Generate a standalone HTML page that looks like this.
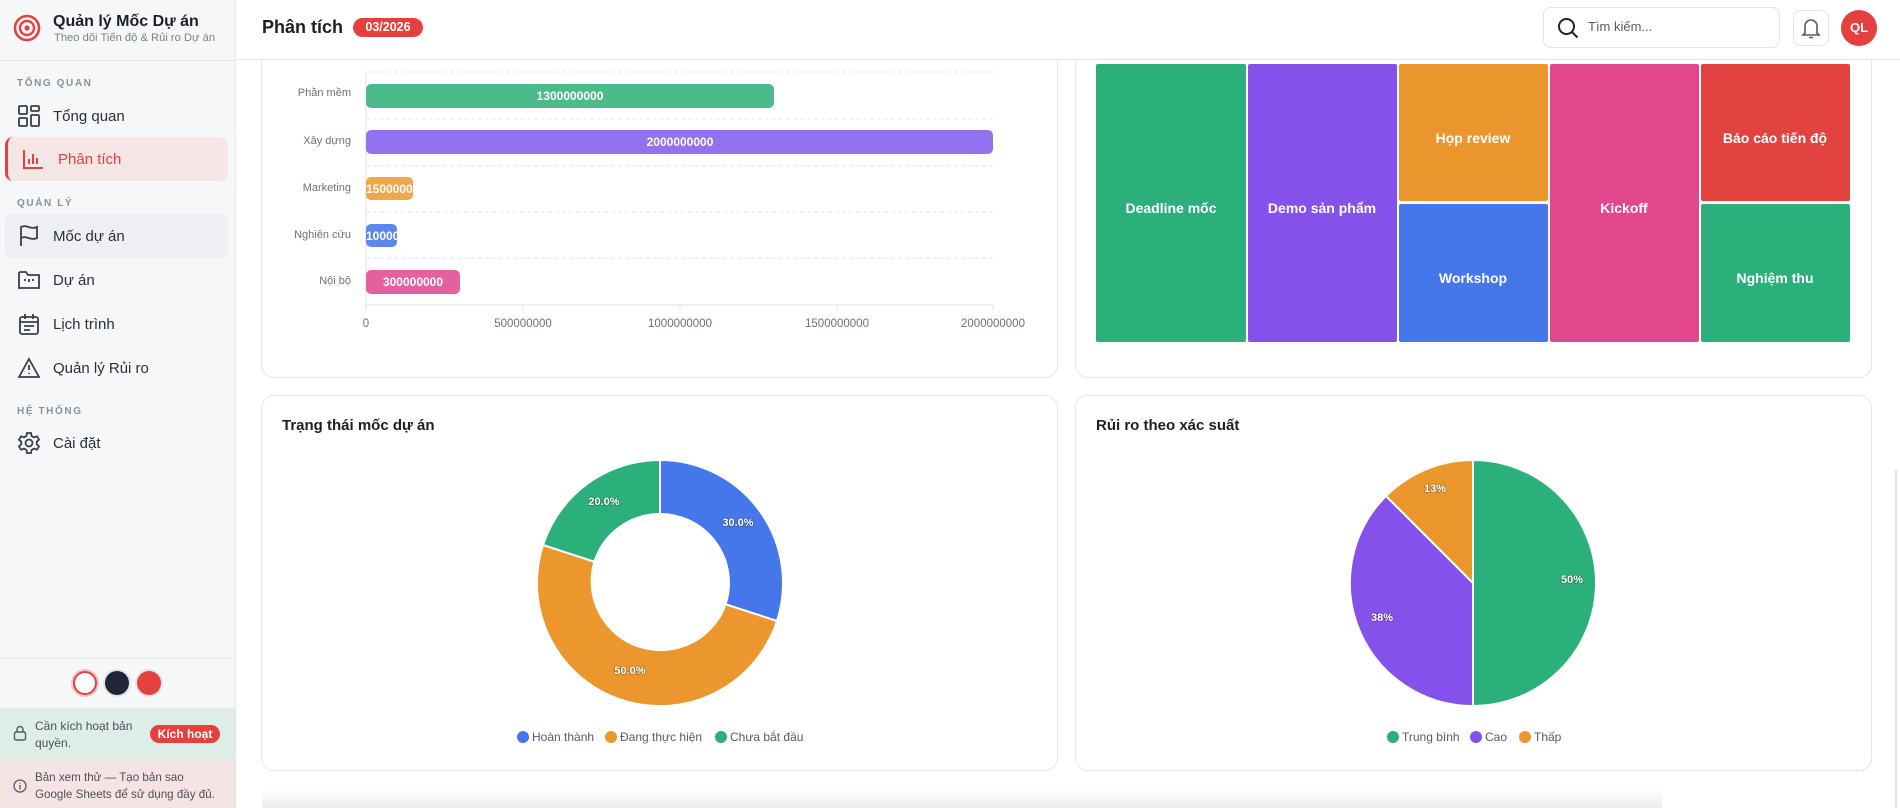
<!DOCTYPE html>
<html><head><meta charset="utf-8"><style>
*{box-sizing:border-box;margin:0;padding:0}
body{width:1900px;height:808px;overflow:hidden;background:#fff;font-family:"Liberation Sans","Noto Sans CJK SC",sans-serif;position:relative;color:#1f2230}
.abs{position:absolute}
.sb{left:0;top:0;width:236px;height:808px;background:#f6f7f9;border-right:1px solid #e6e7eb}
.sec{position:absolute;left:17px;font-size:10px;letter-spacing:1.6px;color:#8a8f99;font-weight:bold}
.nav{position:absolute;left:5px;width:223px;height:44px;border-radius:8px;font-size:15px;color:#2b2f3a;display:flex;align-items:center;padding-left:48px}
.nav svg{position:absolute;left:13px;top:11px}
.card{position:absolute;background:#fff;border:1.5px solid #e6e7eb;border-radius:13px}
.ttl{position:absolute;font-size:15px;font-weight:bold;color:#1c1f2a}
.lg{font-size:12px;fill:#555b66}
</style></head><body>
<div class="abs sb">
 <svg class="abs" style="left:12px;top:13px" width="30" height="30" viewBox="0 0 30 30"><circle cx="15" cy="15" r="12" fill="none" stroke="#e5403d" stroke-width="2.6"/><circle cx="15" cy="15" r="7" fill="none" stroke="#e5403d" stroke-width="2.4"/><circle cx="15" cy="15" r="2.6" fill="#e5403d"/></svg>
 <div class="abs" style="left:53px;top:13px;font-size:16px;font-weight:bold;color:#1c1f2a">Quản lý Mốc Dự án</div>
 <div class="abs" style="left:54px;top:32px;font-size:11.2px;color:#7b808a">Theo dõi Tiến độ &amp; Rủi ro Dự án</div>
 <div class="abs" style="left:0;top:60px;width:236px;height:1px;background:#e4e5e9"></div>
 <div class="sec" style="top:78px">TỔNG QUAN</div>
 <div class="nav" style="top:94px"><svg width="22" height="22" viewBox="0 0 22 22" fill="none" stroke="#3a3e48" stroke-width="1.8"><rect x="1" y="1" width="8" height="8" rx="1"/><rect x="13" y="1" width="8" height="5" rx="1"/><rect x="1" y="13" width="8" height="8" rx="1"/><rect x="13" y="10" width="8" height="11" rx="1"/></svg>Tổng quan</div>
 <div class="nav" style="top:137px;background:#f6e5e5;border-left:3px solid #e5403d;color:#e5403d;padding-left:50px"><svg width="22" height="22" viewBox="0 0 22 22" fill="none" stroke="#e5403d" stroke-width="2" style="left:14px"><path d="M2 2V20H21M7 16V11M11 16V6M15 16V10"/></svg>Phân tích</div>
 <div class="sec" style="top:198px">QUẢN LÝ</div>
 <div class="nav" style="top:214px;background:#eeeff2"><svg width="22" height="22" viewBox="0 0 22 22" fill="none" stroke="#3a3e48" stroke-width="1.8"><path d="M3 21V2C9-1 12 5 19 2V13C12 16 9 10 3 13"/></svg>Mốc dự án</div>
 <div class="nav" style="top:258px"><svg width="22" height="22" viewBox="0 0 22 22" fill="none" stroke="#3a3e48" stroke-width="1.8"><path d="M1 4V19H21V6H10L8 3H2ZM7 10V12M11 10V13M15 10V12"/></svg>Dự án</div>
 <div class="nav" style="top:302px"><svg width="22" height="22" viewBox="0 0 22 22" fill="none" stroke="#3a3e48" stroke-width="1.8"><rect x="2" y="4" width="18" height="17" rx="2"/><path d="M2 9H20M7 1V6M15 1V6M6 13H16M6 17H12"/></svg>Lịch trình</div>
 <div class="nav" style="top:346px"><svg width="22" height="22" viewBox="0 0 22 22" fill="none" stroke="#3a3e48" stroke-width="1.8"><path d="M11 2L21 20H1Z M11 8V13M11 16V17"/></svg>Quản lý Rủi ro</div>
 <div class="sec" style="top:406px">HỆ THỐNG</div>
 <div class="nav" style="top:421px"><svg width="22" height="22" viewBox="0 0 22 22" fill="none" stroke="#3a3e48" stroke-width="1.8"><circle cx="11" cy="11" r="3.5"/><path d="M9 1H13L13.6 4 16 5.4 19 4.3 21 7.7 18.7 9.8V12.2L21 14.3 19 17.7 16 16.6 13.6 18 13 21H9L8.4 18 6 16.6 3 17.7 1 14.3 3.3 12.2V9.8L1 7.7 3 4.3 6 5.4 8.4 4Z"/></svg>Cài đặt</div>
 <div class="abs" style="left:0;top:658px;width:236px;height:1px;background:#e8e9ec"></div>
 <div class="abs" style="left:73px;top:671px;width:24px;height:24px;border-radius:50%;background:#fff;border:2.5px solid #e5403d;box-shadow:0 0 0 2px #f2c4c3"></div>
 <div class="abs" style="left:105px;top:671px;width:24px;height:24px;border-radius:50%;background:#1f2436;box-shadow:0 0 0 2px #e2e3e7"></div>
 <div class="abs" style="left:137px;top:671px;width:24px;height:24px;border-radius:50%;background:#e5403d;box-shadow:0 0 0 2px #e2e3e7"></div>
 <div class="abs" style="left:0;top:708px;width:235px;height:51px;background:#deede7"></div>
 <svg class="abs" style="left:13px;top:725px" width="14" height="16" viewBox="0 0 14 16" fill="none" stroke="#555b66" stroke-width="1.4"><rect x="1.5" y="7" width="11" height="8" rx="1.5"/><path d="M4 7V4.5a3 3 0 0 1 6 0V7"/></svg>
 <div class="abs" style="left:35px;top:718px;font-size:12px;line-height:16.5px;color:#4b505b">Cần kích hoạt bản<br>quyền.</div>
 <div class="abs" style="left:150px;top:725px;width:70px;height:18px;border-radius:9px;background:#e5403d;color:#fff;font-size:12px;font-weight:bold;text-align:center;line-height:18px">Kích hoạt</div>
 <div class="abs" style="left:0;top:759px;width:235px;height:49px;background:#f5e4e3"></div>
 <svg class="abs" style="left:13px;top:779px" width="14" height="14" viewBox="0 0 14 14" fill="none" stroke="#555b66" stroke-width="1.3"><circle cx="7" cy="7" r="6"/><path d="M7 6V10.5M7 3.8V4.6"/></svg>
 <div class="abs" style="left:35px;top:770px;font-size:11.6px;line-height:16.5px;color:#4b505b">Bản xem thử — Tạo bản sao<br>Google Sheets để sử dụng đầy đủ.</div>
</div>

<div class="card" style="left:261px;top:30px;width:797px;height:348px"></div>
<div class="card" style="left:1075px;top:30px;width:797px;height:348px"></div>
<div class="card" style="left:261px;top:395px;width:797px;height:376px"></div>
<div class="card" style="left:1075px;top:395px;width:797px;height:376px"></div>
<div class="ttl" style="left:282px;top:417px">Trạng thái mốc dự án</div>
<div class="ttl" style="left:1096px;top:417px">Rủi ro theo xác suất</div>

<!-- header -->
<div class="abs" style="left:237px;top:0;width:1663px;height:60px;background:#fff;border-bottom:1px solid #e4e5e9"></div>
<div class="abs" style="left:262px;top:17px;font-size:18px;font-weight:bold;color:#1c1f2a">Phân tích</div>
<div class="abs" style="left:353px;top:18px;width:70px;height:19px;border-radius:10px;background:#e5403d;color:#fff;font-size:12.5px;font-weight:bold;text-align:center;line-height:19px">03/2026</div>
<div class="abs" style="left:1543px;top:7px;width:237px;height:41px;border:1px solid #e1e3e7;border-radius:8px"></div>
<svg class="abs" style="left:1557px;top:17px" width="22" height="22" viewBox="0 0 22 22" fill="none" stroke="#1f2230" stroke-width="2"><circle cx="9.5" cy="9.5" r="7.5"/><path d="M15 15L20.5 20.5"/></svg>
<div class="abs" style="left:1588px;top:19px;font-size:13px;color:#555b66">Tìm kiếm...</div>
<div class="abs" style="left:1793px;top:10px;width:36px;height:36px;border:1px solid #e1e3e7;border-radius:8px"></div>
<svg class="abs" style="left:1801px;top:17px" width="20" height="22" viewBox="0 0 20 22" fill="none" stroke="#555b66" stroke-width="1.6"><path d="M4 16V9a6 6 0 0 1 12 0V16L18 18H2Z M8 20.5H12"/></svg>
<div class="abs" style="left:1841px;top:10px;width:36px;height:36px;border-radius:50%;background:#e5403d;color:#fff;font-size:13px;font-weight:bold;text-align:center;line-height:36px">QL</div>

<svg class="abs" style="left:0;top:0" width="1900" height="808">
 <defs><linearGradient id="sh" x1="0" y1="0" x2="0" y2="1"><stop offset="0" stop-color="#fff"/><stop offset="1" stop-color="#ececec"/></linearGradient></defs>
 <rect x="262" y="790" width="1400" height="18" fill="url(#sh)"/>
 <line x1="1896" y1="470" x2="1896" y2="808" stroke="#d8d8d8" stroke-width="1.5"/>
 <g stroke="#e3e4e8" stroke-dasharray="4 3">
  <line x1="366" y1="72" x2="993" y2="72"/><line x1="366" y1="119" x2="993" y2="119"/><line x1="366" y1="166" x2="993" y2="166"/><line x1="366" y1="212" x2="993" y2="212"/><line x1="366" y1="258" x2="993" y2="258"/>
 </g>
 <g stroke="#e0e1e5"><line x1="366" y1="72" x2="366" y2="310"/><line x1="366" y1="305" x2="993" y2="305"/><line x1="523" y1="305" x2="523" y2="310"/><line x1="680" y1="305" x2="680" y2="310"/><line x1="837" y1="305" x2="837" y2="310"/><line x1="993" y1="305" x2="993" y2="310"/></g>
 <g font-size="11" fill="#6b707b" text-anchor="end">
  <text x="351" y="96">Phần mềm</text><text x="351" y="144">Xây dựng</text><text x="351" y="191">Marketing</text><text x="351" y="238">Nghiên cứu</text><text x="351" y="284">Nội bộ</text>
 </g>
 <g font-size="11.5" fill="#6b707b" text-anchor="middle">
  <text x="366" y="327">0</text><text x="523" y="327">500000000</text><text x="680" y="327">1000000000</text><text x="837" y="327">1500000000</text><text x="993" y="327">2000000000</text>
 </g>
 <rect x="366" y="84" width="408" height="24" rx="5" fill="#4cbb8a"/>
 <rect x="366" y="130" width="627" height="24" rx="5" fill="#9370ee"/>
 <rect x="366" y="177" width="47" height="23" rx="5" fill="#f0a64b"/>
 <rect x="366" y="224" width="31" height="23" rx="5" fill="#5b87ef"/>
 <rect x="366" y="270" width="94" height="24" rx="5" fill="#e5609f"/>
 <clipPath id="c1"><rect x="366" y="170" width="47" height="35"/></clipPath>
 <clipPath id="c2"><rect x="366" y="220" width="31" height="35"/></clipPath>
 <g font-size="12" font-weight="bold" fill="#fff">
  <text x="570" y="100" text-anchor="middle">1300000000</text>
  <text x="680" y="146" text-anchor="middle">2000000000</text>
  <text x="366" y="193" clip-path="url(#c1)">1500000</text>
  <text x="366" y="240" clip-path="url(#c2)">10000</text>
  <text x="413" y="286" text-anchor="middle">300000000</text>
 </g>
 <g>
  <rect x="1096" y="64" width="150" height="278" rx="2" fill="#2bb07b"/>
  <rect x="1248" y="64" width="149" height="278" rx="2" fill="#8452ea"/>
  <rect x="1399" y="64" width="149" height="137" rx="2" fill="#ec962e"/>
  <rect x="1399" y="204" width="149" height="138" rx="2" fill="#4677ea"/>
  <rect x="1550" y="64" width="149" height="278" rx="2" fill="#e2468c"/>
  <rect x="1701" y="64" width="149" height="137" rx="2" fill="#e34340"/>
  <rect x="1701" y="204" width="149" height="138" rx="2" fill="#2bb07b"/>
 </g>
 <g font-size="14" font-weight="bold" fill="#fff" text-anchor="middle">
  <text x="1171" y="213">Deadline mốc</text><text x="1322" y="213">Demo sản phẩm</text><text x="1473" y="143">Họp review</text><text x="1473" y="283">Workshop</text><text x="1624" y="213">Kickoff</text><text x="1775" y="143">Báo cáo tiến độ</text><text x="1775" y="283">Nghiệm thu</text>
 </g>
 <g stroke="#fff" stroke-width="2">
  <path d="M660,460 A123,123 0 0 1 777,621 L725.6,604.3 A69,69 0 0 0 660,514 Z" fill="#4677ea"/>
  <path d="M777,621 A123,123 0 1 1 543,545 L594.4,561.7 A69,69 0 0 0 725.6,604.3 Z" fill="#ec962e"/>
  <path d="M543,545 A123,123 0 0 1 660,460 L660,514 A69,69 0 0 0 594.4,561.7 Z" fill="#2bb07b"/>
  <path d="M1473,583 L1473,460 A123,123 0 0 1 1473,706 Z" fill="#2bb07b"/>
  <path d="M1473,583 L1473,706 A123,123 0 0 1 1386,496 Z" fill="#8452ea"/>
  <path d="M1473,583 L1386,496 A123,123 0 0 1 1473,460 Z" fill="#ec962e"/>
 </g>
 <g font-size="11" font-weight="bold" fill="#fff" text-anchor="middle" style="paint-order:stroke" stroke="rgba(0,0,0,0.25)" stroke-width="1.5">
  <text x="604" y="505">20.0%</text><text x="738" y="526">30.0%</text><text x="630" y="674">50.0%</text>
  <text x="1572" y="583">50%</text><text x="1382" y="621">38%</text><text x="1435" y="492">13%</text>
 </g>
 <g class="lg">
  <circle cx="523" cy="737" r="6" fill="#4677ea"/><text x="532" y="741">Hoàn thành</text>
  <circle cx="611" cy="737" r="6" fill="#ec962e"/><text x="620" y="741">Đang thực hiện</text>
  <circle cx="721" cy="737" r="6" fill="#2bb07b"/><text x="730" y="741">Chưa bắt đầu</text>
  <circle cx="1393" cy="737" r="6" fill="#2bb07b"/><text x="1402" y="741">Trung bình</text>
  <circle cx="1476" cy="737" r="6" fill="#8452ea"/><text x="1485" y="741">Cao</text>
  <circle cx="1525" cy="737" r="6" fill="#ec962e"/><text x="1534" y="741">Thấp</text>
 </g>
</svg>
</body></html>
